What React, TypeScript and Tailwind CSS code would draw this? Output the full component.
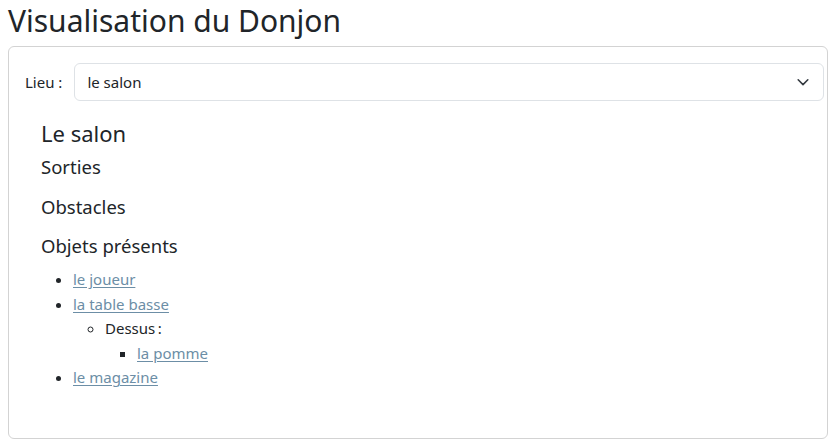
import React from "react";

function Chevron() {
    return (
        <svg width="14" height="14" viewBox="0 0 16 16" fill="none" className="shrink-0">
            <path d="M2.5 5.5L8 11l5.5-5.5" stroke="#343a40" strokeWidth="1.8" strokeLinecap="round" strokeLinejoin="round" />
        </svg>
    );
}

function Lien({ children }: { children: React.ReactNode }) {
    return (
        <a href="#" className="text-[#6c8ea6] underline underline-offset-2 decoration-1">
            {children}
        </a>
    );
}

export default function App() {
    return (
        <div className="min-h-[443px] bg-white px-2 pt-[2px] text-[#212529]" style={{ fontFamily: '"Noto Sans", "Open Sans", sans-serif' }}>
            <h2 className="text-[30px] leading-[38px] mb-[6px]">Visualisation du Donjon</h2>
            <div className="border border-[#d3d3d3] rounded-md pl-4 pr-[3px] pt-4 pb-12">
                <div className="flex items-center gap-3">
                    <label className="text-[15px]">Lieu :</label>
                    <div className="flex-1 h-[38px] border border-[#dee2e6] rounded-md flex items-center justify-between pl-3 pr-[13px] text-[15px]">
                        <span>le salon</span>
                        <Chevron />
                    </div>
                </div>
                <div className="pl-4 pt-[19px]">
                    <h3 className="text-[22px] leading-[26px]">Le salon</h3>
                    <h4 className="text-[18.5px] leading-[22px] mt-[10px]">Sorties</h4>
                    <h4 className="text-[18.5px] leading-[22px] mt-[18px]">Obstacles</h4>
                    <h4 className="text-[18.5px] leading-[22px] mt-[17px]">Objets présents</h4>
                    <ul className="list-disc pl-8 mt-[10px] text-[15px] leading-[24.5px]">
                        <li><Lien>le joueur</Lien></li>
                        <li>
                            <Lien>la table basse</Lien>
                            <ul className="list-[circle] pl-8">
                                <li>
                                    Dessus{"\u202F"}:
                                    <ul className="list-[square] pl-8">
                                        <li><Lien>la pomme</Lien></li>
                                    </ul>
                                </li>
                            </ul>
                        </li>
                        <li><Lien>le magazine</Lien></li>
                    </ul>
                </div>
            </div>
        </div>
    );
}
